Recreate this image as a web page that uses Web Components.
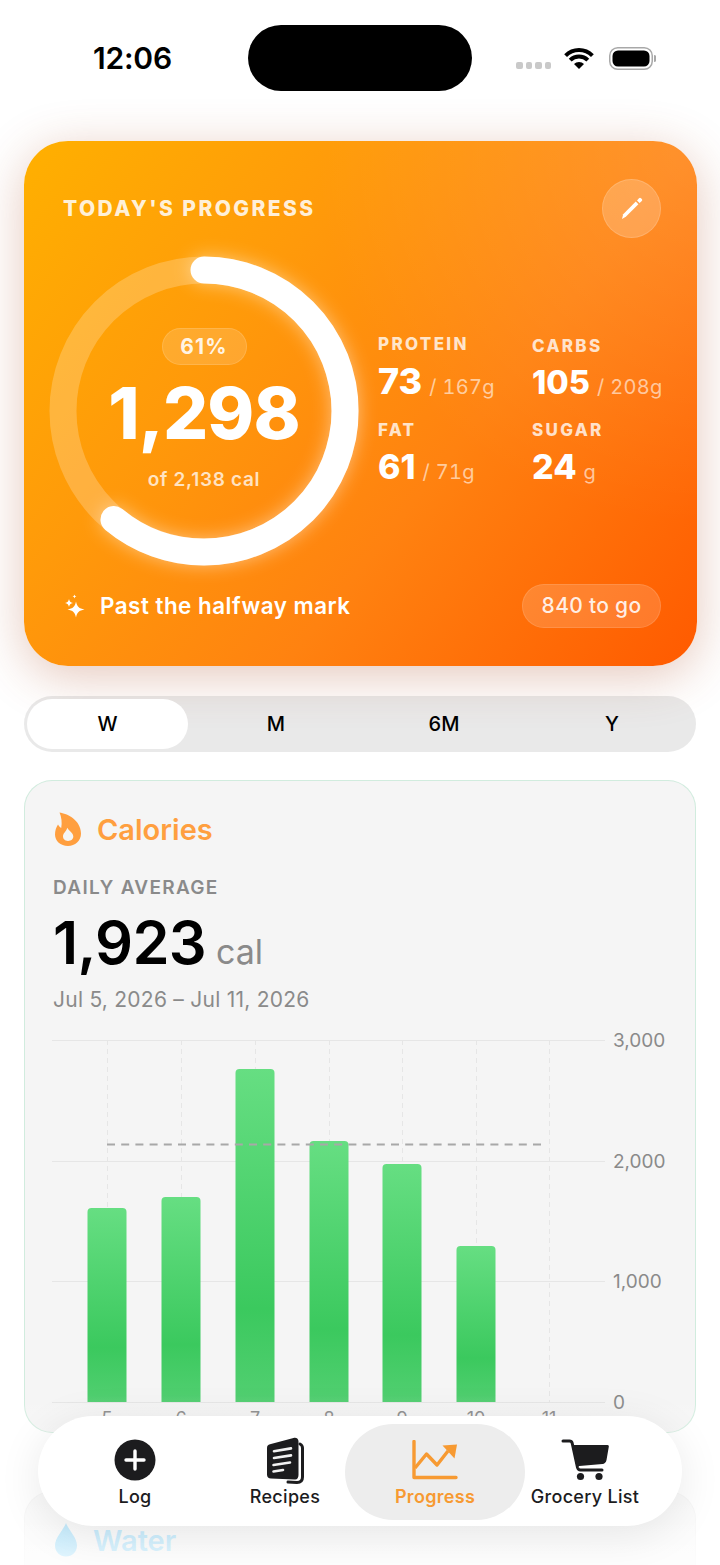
<!DOCTYPE html>
<html lang="en">
<head>
<meta charset="utf-8">
<title>Progress</title>
<style>
    html, body { margin: 0; padding: 0; background: #fff; }
    body { width: 720px; height: 1565px; overflow: hidden; font-family: Inter, "Liberation Sans", sans-serif; }
</style>
</head>
<body>
<app-screen>
    <status-bar></status-bar>
    <hero-card></hero-card>
    <range-picker></range-picker>
    <metric-card label="Calories" color="#ff9f3f" border="rgba(52,199,120,.18)" icon="flame">
        <calorie-summary></calorie-summary>
        <bar-chart></bar-chart>
    </metric-card>
    <metric-card label="Water" color="#5ac8fa" border="rgba(0,0,0,.03)" icon="drop" style="margin-top:58px"></metric-card>
    <tab-bar></tab-bar>
</app-screen>

<script>
class AppScreen extends HTMLElement {
    constructor(){
        super();
        this.shadowDOM = this.attachShadow({mode: "open"});
    }
    connectedCallback() {
        this.shadowDOM.innerHTML = `
        <style>
            :host {
                display: flex;
                flex-direction: column;
                align-items: flex-start;
                position: relative;
                width: 720px;
                height: 1565px;
                overflow: hidden;
                background: #fff;
            }
            .fade {
                position: absolute;
                left: 0;
                right: 0;
                bottom: 0;
                height: 170px;
                background: linear-gradient(to bottom, rgba(255,255,255,0), rgba(255,255,255,.85));
                pointer-events: none;
            }
            ::slotted(*) { flex: none; }
            ::slotted(tab-bar) { z-index: 2; }
        </style>
        <slot></slot>
        <div class="fade"></div>`;
    }
}

class StatusBar extends HTMLElement {
    constructor(){
        super();
        this.shadowDOM = this.attachShadow({mode: "open"});
    }
    connectedCallback() {
        this.shadowDOM.innerHTML = `
        <style>
            :host {
                display: grid;
                grid-template-columns: 248px 224px 1fr;
                align-items: start;
                width: 720px;
                height: 141px;
                padding-top: 25px;
                box-sizing: border-box;
            }
            .time {
                padding: 15px 0 0 93px;
                font-size: 30px;
                line-height: 36px;
                font-weight: 600;
                letter-spacing: -.2px;
                color: #000;
            }
            .island { height: 66px; border-radius: 33px; background: #000; }
            .right { display: flex; align-items: center; padding: 22px 0 0 44px; }
            .dots { display: flex; gap: 3px; margin: 14px 13px 0 0; }
            .dots i { width: 6.5px; height: 6.5px; border-radius: 2px; background: #c9c9c9; }
            .wifi { width: 30px; height: 22px; margin-right: 15px; }
            .battery { width: 47px; height: 23px; }
        </style>
        <div class="time">12:06</div>
        <div class="island"></div>
        <div class="right">
            <div class="dots"><i></i><i></i><i></i><i></i></div>
            <svg class="wifi" viewBox="0 0 30 22">
                <path d="M15 21 10 16A7 7 0 0 1 20 16Z" fill="#000"/>
                <path d="M6.2 12.2A12.5 12.5 0 0 1 23.8 12.2M1.6 7.6A19 19 0 0 1 28.4 7.6" fill="none" stroke="#000" stroke-width="4"/>
            </svg>
            <svg class="battery" viewBox="0 0 47 23">
                <rect x=".75" y=".75" width="42.5" height="21.5" rx="8" fill="none" stroke="#a8a8a8" stroke-width="1.5"/>
                <rect x="3.5" y="3.5" width="37" height="16" rx="5.5" fill="#000"/>
                <path d="M45 8a3 3.5 0 0 1 0 7Z" fill="#a8a8a8"/>
            </svg>
        </div>`;
    }
}

class ProgressRing extends HTMLElement {
    constructor(){
        super();
        this.shadowDOM = this.attachShadow({mode: "open"});
    }
    connectedCallback() {
        const r = 141;
        const len = 2 * Math.PI * r;
        const pct = Number(this.getAttribute("percent"));
        this.shadowDOM.innerHTML = `
        <style>
            :host {
                display: flex;
                flex-direction: column;
                align-items: center;
                position: relative;
                width: 310px;
                height: 310px;
                flex: none;
                color: #fff;
            }
            svg { position: absolute; left: 0; top: 0; overflow: visible; }
            .pill {
                position: relative;
                margin-top: 72px;
                height: 37px;
                width: 85px;
                box-sizing: border-box;
                border-radius: 18.5px;
                background: rgba(255,255,255,.15);
                border: 1px solid rgba(255,255,255,.14);
                text-align: center;
                font-size: 21px;
                line-height: 35px;
                font-weight: 700;
                letter-spacing: 1.2px;
                color: rgba(255,255,255,.88);
            }
            .value {
                position: relative;
                margin-top: 5px;
                font-size: 71px;
                line-height: 86px;
                font-weight: 800;
                letter-spacing: -.9px;
            }
            .of {
                position: relative;
                margin-top: 13px;
                font-size: 19px;
                line-height: 22px;
                font-weight: 600;
                letter-spacing: .7px;
                color: rgba(255,255,255,.75);
            }
        </style>
        <svg width="310" height="310" viewBox="0 0 310 310">
            <circle cx="155" cy="155" r="${r}" fill="none" stroke="rgba(255,255,255,.22)" stroke-width="27"/>
            <circle cx="155" cy="155" r="${r}" fill="none" stroke="#fff" stroke-width="27" stroke-linecap="round"
                stroke-dasharray="${len * pct / 100} ${len}" transform="rotate(-90 155 155)"
                style="filter: drop-shadow(0 0 9px rgba(255,255,255,.45))"/>
        </svg>
        <div class="pill">${pct}%</div>
        <div class="value"><slot></slot></div>
        <div class="of"><slot name="goal"></slot></div>`;
    }
}

class MacroStat extends HTMLElement {
    constructor(){
        super();
        this.shadowDOM = this.attachShadow({mode: "open"});
    }
    connectedCallback() {
        const size = this.getAttribute("size") || 34;
        this.shadowDOM.innerHTML = `
        <style>
            :host { display: block; color: #fff; white-space: nowrap; }
            .name {
                font-size: 17px;
                line-height: 20px;
                font-weight: 800;
                letter-spacing: 2.3px;
                color: rgba(255,255,255,.78);
            }
            .line { display: flex; align-items: baseline; height: 42px; margin-top: 6px; }
            b { font-size: ${size}px; line-height: 42px; font-weight: 800; }
            span {
                margin-left: 7px;
                font-size: 20px;
                font-weight: 400;
                font-variant-numeric: tabular-nums;
                letter-spacing: .3px;
                color: rgba(255,255,255,.6);
            }
        </style>
        <div class="name">${this.getAttribute("name")}</div>
        <div class="line"><b>${this.getAttribute("value")}</b><span>${this.getAttribute("unit")}</span></div>`;
    }
}

class HeroCard extends HTMLElement {
    constructor(){
        super();
        this.shadowDOM = this.attachShadow({mode: "open"});
    }
    connectedCallback() {
        this.shadowDOM.innerHTML = `
        <style>
            :host {
                display: block;
                box-sizing: border-box;
                width: 673px;
                height: 525px;
                margin-left: 24px;
                padding: 38px 36px 38px 39px;
                border-radius: 44px;
                background:
                    radial-gradient(circle at 100% 0, rgba(255,255,255,.12), rgba(255,255,255,0) 45%),
                    linear-gradient(128deg, #ffb000 0%, #ff9a0a 32%, #ff8210 62%, #ff5a00 100%);
                box-shadow: 0 10px 50px rgba(170,70,30,.3);
                color: #fff;
            }
            .top { display: flex; align-items: center; justify-content: space-between; height: 58px; }
            .title { font-size: 21px; font-weight: 800; letter-spacing: 2.4px; color: rgba(255,255,255,.85); }
            .edit {
                display: flex;
                align-items: center;
                justify-content: center;
                width: 59px;
                height: 59px;
                box-sizing: border-box;
                border-radius: 50%;
                background: rgba(255,255,255,.2);
                border: 1px solid rgba(255,255,255,.16);
            }
            .middle { display: flex; align-items: center; margin: 19px 0 0 -14px; }
            .macros {
                display: grid;
                grid-template-columns: 154px 1fr;
                row-gap: 16px;
                margin-left: 19px;
                width: 300px;
                flex: none;
            }
            .bottom { display: flex; align-items: center; height: 44px; margin-top: 18px; }
            .note { margin: -2px 0 0 14px; font-size: 22.4px; font-weight: 600; letter-spacing: .5px; }
            .togo {
                margin-left: auto;
                width: 139px;
                height: 44px;
                box-sizing: border-box;
                border-radius: 22px;
                background: rgba(255,255,255,.16);
                border: 1px solid rgba(255,255,255,.12);
                text-align: center;
                font-size: 21px;
                line-height: 42px;
                font-weight: 500;
                letter-spacing: .3px;
                color: rgba(255,255,255,.88);
            }
        </style>
        <div class="top">
            <div class="title">TODAY'S PROGRESS</div>
            <div class="edit">
                <svg width="26" height="26" viewBox="0 0 26 26">
                    <path d="M3 24 4.200 19.200 16.800 6.600 19.400 9.200 6.800 21.800Z" fill="#fff"/>
                    <path d="M18 5.400 20 3.200a1.400 1.400 0 0 1 2 0l.8.800a1.400 1.400 0 0 1 0 2L20.600 8Z" fill="#fff"/>
                </svg>
            </div>
        </div>
        <div class="middle">
            <progress-ring percent="61">1,298<span slot="goal">of 2,138 cal</span></progress-ring>
            <div class="macros">
                <macro-stat name="PROTEIN" value="73" unit="/ 167g" size="36"></macro-stat>
                <macro-stat name="CARBS" value="105" unit="/ 208g" size="32.5" style="margin-top:2px"></macro-stat>
                <macro-stat name="FAT" value="61" unit="/ 71g"></macro-stat>
                <macro-stat name="SUGAR" value="24" unit="g"></macro-stat>
            </div>
        </div>
        <div class="bottom">
            <svg width="22" height="24" viewBox="0 0 22 24" style="margin-left:1px">
                <path d="M12 7.500C13 12.600 15 14.600 20.500 15.500 15 16.400 13 18.400 12 23.500 11 18.400 9 16.400 3.500 15.500 9 14.600 11 12.600 12 7.500Z" fill="#fff"/>
                <path d="M5 5C5.500 7.500 6.400 8.400 9 9 6.400 9.600 5.500 10.500 5 13 4.500 10.500 3.600 9.600 1 9 3.600 8.400 4.500 7.500 5 5Z" fill="#fff"/>
                <path d="M10.500 .5C10.800 1.800 11.200 2.200 12.500 2.500 11.200 2.800 10.800 3.200 10.500 4.500 10.200 3.200 9.800 2.800 8.500 2.500 9.800 2.200 10.200 1.800 10.500 .5Z" fill="#fff"/>
            </svg>
            <div class="note">Past the halfway mark</div>
            <div class="togo">840 to go</div>
        </div>`;
    }
}

class RangePicker extends HTMLElement {
    constructor(){
        super();
        this.shadowDOM = this.attachShadow({mode: "open"});
    }
    connectedCallback() {
        this.shadowDOM.innerHTML = `
        <style>
            :host {
                display: grid;
                grid-template-columns: repeat(4, 1fr);
                box-sizing: border-box;
                width: 672px;
                height: 56px;
                margin: 30px 0 0 24px;
                padding: 3px 0;
                border-radius: 28px;
                background: rgba(120,120,120,.16);
                font-size: 20px;
                font-weight: 450;
                color: #000;
            }
            div { display: flex; align-items: center; justify-content: center; }
            .on { background: #fff; border-radius: 25px; margin: 0 4px 0 3px; }
        </style>
        <div class="on">W</div><div>M</div><div>6M</div><div>Y</div>`;
    }
}

const METRIC_ICONS = {
    flame: `<svg width="28" height="34" viewBox="0 0 28 34" style="margin-left:1px">
        <path d="M5.500 .5C13 1.500 27 8 27 21.500 27 28.800 21 34 14 34 6.500 34 1 29 1 22.500 1 18.800 2.200 15.200 4 12.500 4.800 14 5.800 15.300 7.200 16 8.300 11 7.500 5 5.500 .5Z" fill="currentColor"/>
        <path d="M14 29C11 29 9 27 9 24.300 9 21.300 12 20 13.300 15.800 15 19 19.300 20.800 19.300 24.600 19.300 27.200 17.200 29 14 29Z" fill="#f5f5f5"/>
    </svg>`,
    drop: `<svg width="24" height="34" viewBox="0 0 24 34" style="margin-left:1px">
        <path d="M12 0C14.500 7 23 14.500 23 22.500 23 29 18 33.500 12 33.500 6 33.500 1 29 1 22.500 1 14.500 9.500 7 12 0Z" fill="currentColor"/>
    </svg>`
};

class MetricCard extends HTMLElement {
    constructor(){
        super();
        this.shadowDOM = this.attachShadow({mode: "open"});
    }
    connectedCallback() {
        const color = this.getAttribute("color");
        this.shadowDOM.innerHTML = `
        <style>
            :host {
                display: block;
                box-sizing: border-box;
                width: 672px;
                height: 653px;
                margin: 28px 0 0 24px;
                padding: 30px 0 0 28px;
                border-radius: 28px;
                background: #f5f5f5;
                border: 1px solid ${this.getAttribute("border")};
            }
            .head {
                display: flex;
                align-items: center;
                gap: 15px;
                height: 36px;
                color: ${color};
                font-size: 29px;
                font-weight: 600;
            }
        </style>
        <div class="head">${METRIC_ICONS[this.getAttribute("icon")]}<span>${this.getAttribute("label")}</span></div>
        <slot></slot>`;
    }
}

class CalorieSummary extends HTMLElement {
    constructor(){
        super();
        this.shadowDOM = this.attachShadow({mode: "open"});
    }
    connectedCallback() {
        this.shadowDOM.innerHTML = `
        <style>
            :host { display: block; margin-top: 30px; color: #8a8a8a; }
            .cap { font-size: 19px; line-height: 22px; font-weight: 600; letter-spacing: 1.3px; }
            .avg { display: flex; align-items: baseline; gap: 10px; height: 70px; margin-top: 8px; }
            b { font-size: 59.5px; line-height: 70px; font-weight: 600; letter-spacing: -.7px; color: #000; }
            span { font-size: 34px; font-weight: 400; }
            .range { margin-top: 10px; font-size: 21px; line-height: 26px; letter-spacing: .25px; }
        </style>
        <div class="cap">DAILY AVERAGE</div>
        <div class="avg"><b>1,923</b><span>cal</span></div>
        <div class="range">Jul 5, 2026 – Jul 11, 2026</div>`;
    }
}

class BarChart extends HTMLElement {
    constructor(){
        super();
        this.shadowDOM = this.attachShadow({mode: "open"});
    }
    connectedCallback() {
        // plot is 362 tall for 3000 cal, columns 73.8 apart
        const tall = 362, colX = [55, 129, 203, 277, 350, 424, 497];
        const days = [5, 6, 7, 8, 9, 10, 11];
        const tops = [168, 157, 29, 101, 124, 206];
        const grid = [0, 121, 241, 362].map((y, i) => `
            <line x1="0" x2="553" y1="${y + .5}" y2="${y + .5}" stroke="#e6e6e6"/>
            <text x="561" y="${y + 7}" font-size="19" fill="#8a8a8a">${["3,000", "2,000", "1,000", "0"][i]}</text>`).join("");
        const cols = colX.map((x, i) => `
            <line x1="${x + .5}" x2="${x + .5}" y1="0" y2="${tall}" stroke="#e6e6e6" stroke-dasharray="5 4"/>
            <text x="${x}" y="385" font-size="18" text-anchor="middle" fill="#8a8a8a">${days[i]}</text>`).join("");
        const bars = tops.map((y, i) => `
            <path d="M${colX[i] - 19.500} ${tall}V${y + 4}a4 4 0 0 1 4 -4h31a4 4 0 0 1 4 4V${tall}Z" fill="url(#bar${i})"/>
            <linearGradient id="bar${i}" x1="0" y1="0" x2="0" y2="1">
                <stop offset="0" stop-color="#66de82"/><stop offset=".72" stop-color="#3bc95e"/><stop offset="1" stop-color="#52cf71"/>
            </linearGradient>`).join("");
        this.shadowDOM.innerHTML = `
        <style>
            :host { display: block; margin-top: 27px; }
            svg { display: block; overflow: visible; font-family: Inter, "Liberation Sans", sans-serif; }
        </style>
        <svg width="640" height="400" viewBox="0 0 640 400" style="margin-left:-1px">
            ${grid}${cols}${bars}
            <line x1="55" x2="494" y1="104.500" y2="104.500" stroke="#a8a8a8" stroke-width="2" stroke-dasharray="8 6.200"/>
        </svg>`;
    }
}

class TabItem extends HTMLElement {
    constructor(){
        super();
        this.shadowDOM = this.attachShadow({mode: "open"});
    }
    connectedCallback() {
        this.shadowDOM.innerHTML = `
        <style>
            :host {
                display: flex;
                flex-direction: column;
                align-items: center;
                position: relative;
                color: #1c1c1e;
                font-size: 18px;
                font-weight: 500;
                letter-spacing: .3px;
            }
            :host([active]) { color: #f79a32; font-weight: 600; }
            :host([active])::before {
                content: "";
                position: absolute;
                left: -15px;
                right: -15px;
                top: 0;
                bottom: 0;
                border-radius: 48px;
                background: #ededed;
            }
            .icon { position: relative; height: 48px; margin-top: 12px; display: flex; align-items: center; }
            .label { position: relative; margin-top: 2px; line-height: 22px; white-space: nowrap; }
        </style>
        <div class="icon"><slot></slot></div>
        <div class="label">${this.getAttribute("label")}</div>`;
    }
}

class TabBar extends HTMLElement {
    constructor(){
        super();
        this.shadowDOM = this.attachShadow({mode: "open"});
    }
    connectedCallback() {
        this.shadowDOM.innerHTML = `
        <style>
            :host {
                display: grid;
                grid-template-columns: repeat(4, 150px);
                position: absolute;
                left: 38px;
                top: 1416px;
                width: 644px;
                height: 110px;
                box-sizing: border-box;
                padding: 8px 22px 6px;
                border-radius: 55px;
                background: #fff;
                box-shadow: 0 8px 44px rgba(0,0,0,.09);
            }
        </style>
        <tab-item label="Log">
            <svg width="42" height="42" viewBox="0 0 42 42">
                <circle cx="21" cy="21" r="20.500" fill="#1c1c1e"/>
                <path d="M21 12v18M12 21h18" stroke="#fff" stroke-width="3.400" stroke-linecap="round"/>
            </svg>
        </tab-item>
        <tab-item label="Recipes">
            <svg width="38" height="47" viewBox="0 0 38 47">
                <path d="M34 7C36 8 36.500 9 36.500 11V40C36.500 43.500 34.500 45.500 31 45.500L22 45" fill="none" stroke="#1c1c1e" stroke-width="3" stroke-linecap="round"/>
                <path d="M1 11C1 9 2 7.800 4 7.300L27.500 1C30.500.3 32.500 1.800 32.500 4.500V38C32.500 41 31 43 28.500 42.500L5 41.500C2.500 41.400 1 40 1 37.500Z" fill="#1c1c1e"/>
                <path d="M8 14.200 25 11.400M8 21 25 18.400M7.500 28 24 25.500M7.500 34.500 17 33" stroke="#f2f2f2" stroke-width="2.600" stroke-linecap="round" fill="none"/>
            </svg>
        </tab-item>
        <tab-item label="Progress" active>
            <svg width="46" height="40" viewBox="0 0 46 40">
                <path d="M2 1.500V37.500H44" fill="none" stroke="currentColor" stroke-width="3.400" stroke-linecap="round" stroke-linejoin="round"/>
                <path d="M3 28 14.500 14 25 25 36 11" fill="none" stroke="currentColor" stroke-width="3.400" stroke-linejoin="round"/>
                <path d="M30.500 5.500 45 4.500 42.500 18.500Z" fill="currentColor"/>
            </svg>
        </tab-item>
        <tab-item label="Grocery List">
            <svg width="48" height="42" viewBox="0 0 48 42">
                <path d="M2 2H8.500C10 2 10.800 2.800 11.200 4.200L16.500 28.500C17 30.500 18 31 19.500 31H41" fill="none" stroke="#1c1c1e" stroke-width="3" stroke-linecap="round" stroke-linejoin="round"/>
                <path d="M11 6H46.500C47.500 6 48 6.800 47.800 7.800L45.500 21C45 23.500 43.500 24.800 41.500 25L15.500 27.300Z" fill="#1c1c1e"/>
                <circle cx="19.500" cy="37.500" r="3.600" fill="#1c1c1e"/>
                <circle cx="38" cy="37.500" r="3.600" fill="#1c1c1e"/>
            </svg>
        </tab-item>`;
    }
}

customElements.define("app-screen", AppScreen);
customElements.define("status-bar", StatusBar);
customElements.define("progress-ring", ProgressRing);
customElements.define("macro-stat", MacroStat);
customElements.define("hero-card", HeroCard);
customElements.define("range-picker", RangePicker);
customElements.define("metric-card", MetricCard);
customElements.define("calorie-summary", CalorieSummary);
customElements.define("bar-chart", BarChart);
customElements.define("tab-item", TabItem);
customElements.define("tab-bar", TabBar);
</script>
</body>
</html>
